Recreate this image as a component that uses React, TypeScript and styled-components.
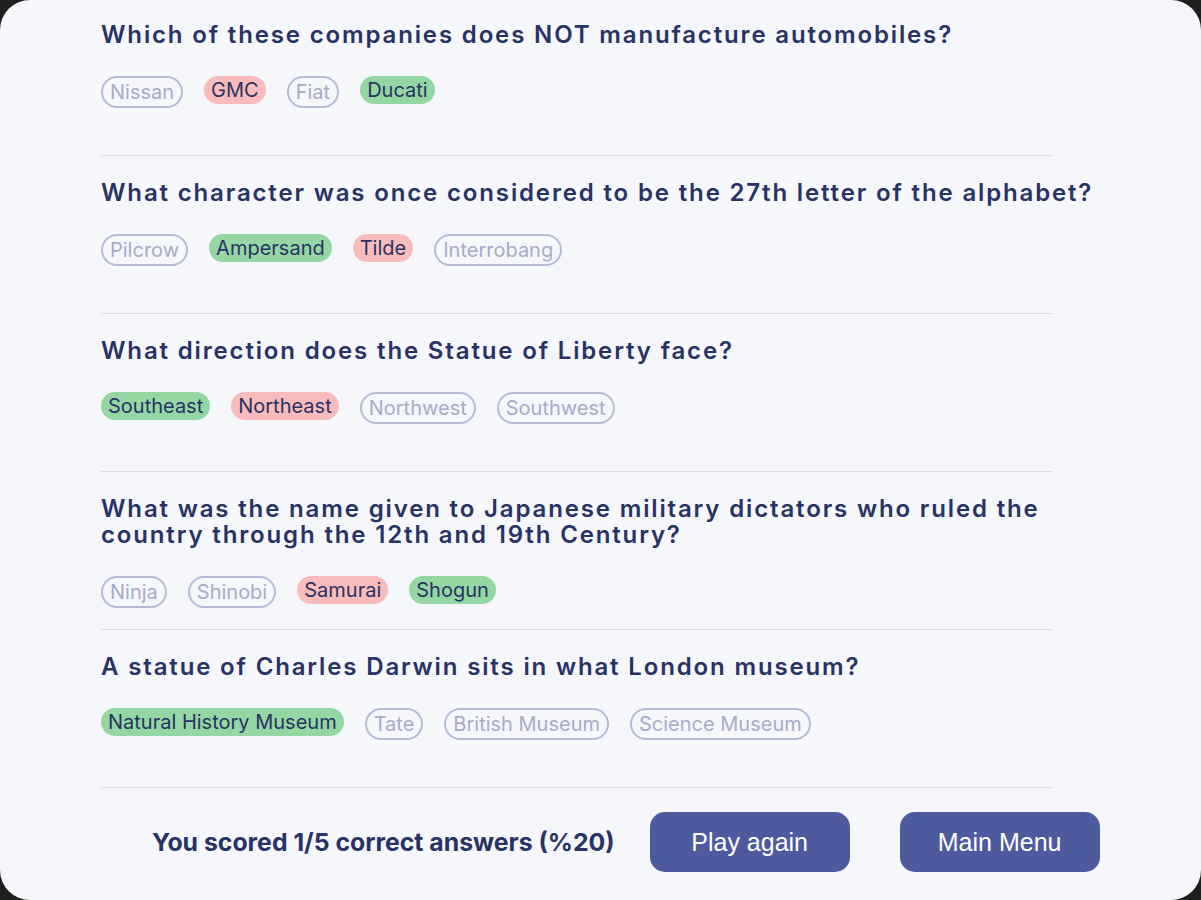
import styled, { createGlobalStyle } from "styled-components";

const GlobalStyle = createGlobalStyle`
  html, body {
    margin: 0;
    padding: 0;
    background: #1f1f1f;
  }
  * {
    box-sizing: border-box;
  }
`;

const Card = styled.div`
  width: 1201px;
  height: 900px;
  background: #f5f7fb;
  border-radius: 30px;
  overflow: hidden;
  display: flex;
  flex-direction: column;
`;

const QuestionList = styled.div`
  margin-top: -2px;
  padding-left: 101px;
  display: flex;
  flex-direction: column;
`;

const QuestionBlock = styled.div`
  width: 951px;
  height: 158px;
  padding-top: 24px;
  border-bottom: 1px solid #dbdef0;
  display: flex;
  flex-direction: column;
`;

const QuestionTitle = styled.h2`
  margin: 0 0 28px;
  width: 995px;
  font-family: "Inter", "Liberation Sans", sans-serif;
  font-weight: 600;
  font-size: 24px;
  line-height: 26px;
  letter-spacing: 1.85px;
  color: #293264;
`;

const Answers = styled.div`
  display: flex;
  align-items: flex-start;
  gap: 21px;
`;

type ChipKind = "correct" | "wrong" | "idle";

const Chip = styled.span<{ $kind: ChipKind }>`
  font-family: "Inter", "Liberation Sans", sans-serif;
  font-size: 20px;
  line-height: 28px;
  height: ${p => (p.$kind === "idle" ? "32px" : "28px")};
  padding: 0 7px;
  border-radius: 16px;
  border: ${p => (p.$kind === "idle" ? "2px solid #b6bad6" : "none")};
  background: ${p =>
    p.$kind === "correct" ? "#94d7a2" : p.$kind === "wrong" ? "#f8bcbc" : "transparent"};
  color: ${p => (p.$kind === "idle" ? "#a7abc8" : "#293264")};
  white-space: nowrap;
`;

const Footer = styled.div`
  display: flex;
  align-items: center;
  padding-left: 152px;
  margin-top: 24px;
`;

const Score = styled.div`
  font-family: "Inter", "Liberation Sans", sans-serif;
  font-weight: 700;
  font-size: 24.8px;
  color: #293264;
  margin-right: 35px;
  white-space: nowrap;
`;

const ActionButton = styled.button`
  width: 200px;
  height: 60px;
  border: none;
  border-radius: 15px;
  background: #4d5b9e;
  color: #ffffff;
  font-family: "Liberation Sans", Arial, sans-serif;
  font-size: 25px;
  cursor: pointer;
  & + & {
    margin-left: 50px;
  }
`;

type Question = {
  text: string;
  answers: { label: string; kind: ChipKind }[];
};

const questions: Question[] = [
  {
    text: "Which of these companies does NOT manufacture automobiles?",
    answers: [
      { label: "Nissan", kind: "idle" },
      { label: "GMC", kind: "wrong" },
      { label: "Fiat", kind: "idle" },
      { label: "Ducati", kind: "correct" },
    ],
  },
  {
    text: "What character was once considered to be the 27th letter of the alphabet?",
    answers: [
      { label: "Pilcrow", kind: "idle" },
      { label: "Ampersand", kind: "correct" },
      { label: "Tilde", kind: "wrong" },
      { label: "Interrobang", kind: "idle" },
    ],
  },
  {
    text: "What direction does the Statue of Liberty face?",
    answers: [
      { label: "Southeast", kind: "correct" },
      { label: "Northeast", kind: "wrong" },
      { label: "Northwest", kind: "idle" },
      { label: "Southwest", kind: "idle" },
    ],
  },
  {
    text: "What was the name given to Japanese military dictators who ruled the country through the 12th and 19th Century?",
    answers: [
      { label: "Ninja", kind: "idle" },
      { label: "Shinobi", kind: "idle" },
      { label: "Samurai", kind: "wrong" },
      { label: "Shogun", kind: "correct" },
    ],
  },
  {
    text: "A statue of Charles Darwin sits in what London museum?",
    answers: [
      { label: "Natural History Museum", kind: "correct" },
      { label: "Tate", kind: "idle" },
      { label: "British Museum", kind: "idle" },
      { label: "Science Museum", kind: "idle" },
    ],
  },
];

export default function App(): JSX.Element {
  return (
    <>
      <GlobalStyle />
      <Card>
        <QuestionList>
          {questions.map(q => (
            <QuestionBlock key={q.text}>
              <QuestionTitle>{q.text}</QuestionTitle>
              <Answers>
                {q.answers.map(a => (
                  <Chip key={a.label} $kind={a.kind}>
                    {a.label}
                  </Chip>
                ))}
              </Answers>
            </QuestionBlock>
          ))}
        </QuestionList>
        <Footer>
          <Score>You scored 1/5 correct answers (%20)</Score>
          <ActionButton>Play again</ActionButton>
          <ActionButton>Main Menu</ActionButton>
        </Footer>
      </Card>
    </>
  );
}
